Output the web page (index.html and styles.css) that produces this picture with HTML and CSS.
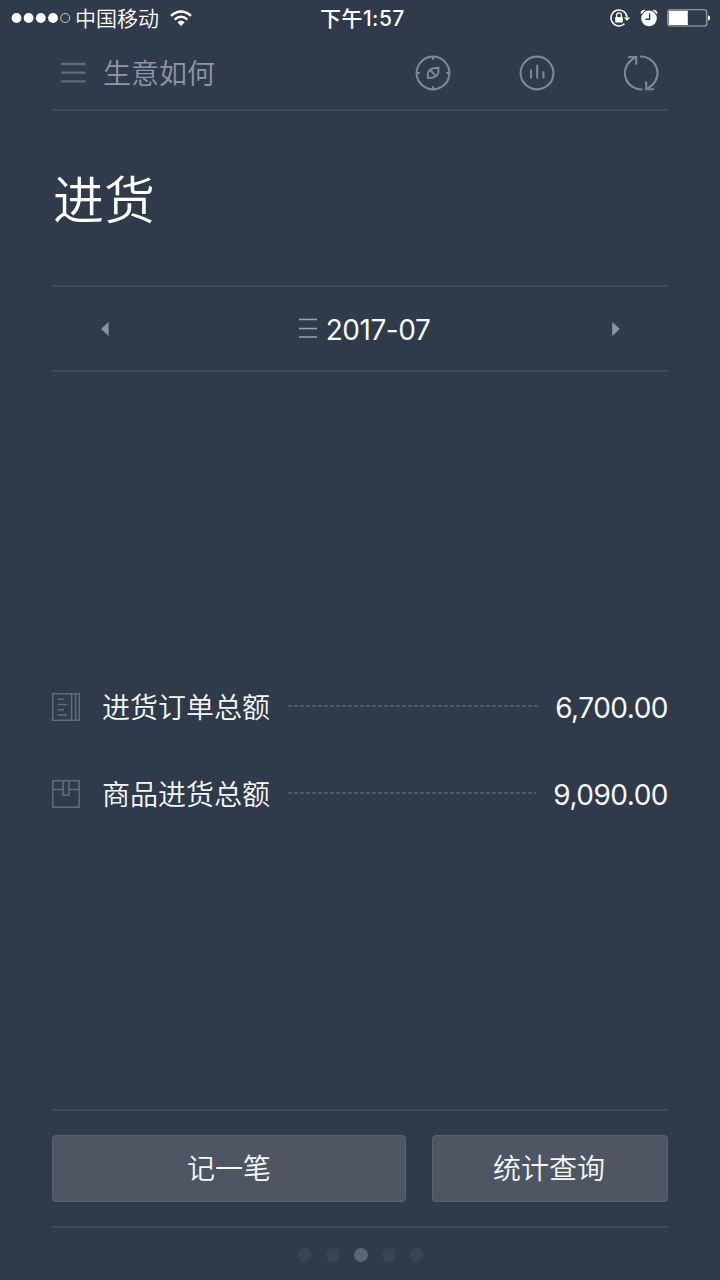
FILE: index.html
```html
<!DOCTYPE html>
<html lang="zh-CN">
<head>
<meta charset="utf-8">
<title>进货</title>
<link rel="stylesheet" href="styles.css">
</head>
<body>
<div class="app">
  <div class="status">
    <div class="status-left">
      <svg class="signal" width="60" height="12" viewBox="0 0 60 12"><g fill="#fff"><circle cx="5.5" cy="6" r="4.9"/><circle cx="17.6" cy="6" r="4.9"/><circle cx="29.8" cy="6" r="4.9"/><circle cx="42" cy="6" r="4.9"/></g><circle cx="54.2" cy="6" r="4.5" fill="none" stroke="#d5d9de" stroke-width=".9"/></svg>
      <span class="carrier">中国移动</span>
      <svg class="wifi" width="22" height="17" viewBox="0 0 22 17"><g fill="none" stroke="#fff" stroke-width="2.4"><path d="M1 5.8Q11 -2.8 21 5.8"/><path d="M4.6 9.7Q11 4 17.4 9.7"/></g><path d="M7.4 12.2Q11 9 14.6 12.2L11 16Z" fill="#fff"/></svg>
    </div>
    <span class="clock">下午1:57</span>
    <div class="status-right">
      <svg width="21" height="18" viewBox="0 0 21 18"><path d="M14.5 14.8A8 8 0 1 1 17 8.4" fill="none" stroke="#fff" stroke-width="1.5"/><path d="M13.7 8.4H20.2L17 11.9Z" fill="#fff"/><rect x="5.2" y="7.9" width="7.6" height="5.7" rx=".7" fill="#fff"/><path d="M6.6 8V6.3a2.4 2.4 0 0 1 4.8 0V8" fill="none" stroke="#fff" stroke-width="1.3"/></svg>
      <svg width="18" height="18" viewBox="0 0 18 18"><circle cx="9" cy="9.4" r="7.8" fill="#fff"/><path d="M.8 4.2Q1 1 5 1L1.4 4.8ZM17.2 4.2Q17 1 13 1L16.6 4.8Z" fill="#fff" stroke="#fff" stroke-width=".6"/><path d="M9.6 4.6V10.2H5.4" fill="none" stroke="#2f3a4a" stroke-width="1.4"/></svg>
      <svg width="44" height="18" viewBox="0 0 44 18"><rect x=".8" y=".8" width="39" height="16.2" rx="2.6" fill="none" stroke="#a6acb5" stroke-width="1.1"/><path d="M3 1.8H20.8V16H3Q1.8 16 1.8 14.8V3Q1.8 1.8 3 1.8Z" fill="#fff"/><path d="M41 6.2Q43.2 7 43.2 9T41 11.8Z" fill="#fff"/></svg>
    </div>
  </div>
  <header class="topbar">
    <svg class="menu" width="26" height="22" viewBox="0 0 26 22"><path d="M1 2H25.5M1 10.7H25.5M1 19.4H25.5" stroke="#626b79" stroke-width="2.3"/></svg>
    <span class="brand">生意如何</span>
    <nav class="tools">
      <svg width="36" height="36" viewBox="0 0 36 36" fill="none" stroke="#7e8796" stroke-width="2.1"><circle cx="18" cy="18" r="16.4"/><path d="M18 1.5V4.7M18 31.3V34.5M1.5 18H4.7M31.3 18H34.5"/><path d="M12.8 23.1V18.2Q14.2 12.7 23.4 12.7V17.8Q22 23.1 12.8 23.1ZM15 15L21 21" stroke-width="1.9"/></svg>
      <svg width="36" height="36" viewBox="0 0 36 36" fill="none" stroke="#7e8796" stroke-width="2.1"><circle cx="18" cy="18" r="16.4"/><path d="M12 15.2V22.8M18.2 10.6V22.8M24.4 17.2V22.8" stroke-linecap="round"/></svg>
      <svg width="36" height="36" viewBox="0 0 36 36" fill="none" stroke="#7e8796" stroke-width="2.1"><path d="M19.4 34.4A16.4 16.4 0 0 1 7.6 5.6L12.6 2M17 1.6A16.4 16.4 0 0 1 28.8 30.4L23.8 34"/><path d="M5.2 2H13.2V9.8M31.2 34.2H23.2V26.2"/></svg>
    </nav>
  </header>
  <h1 class="title">进货</h1>
  <section class="month">
    <svg width="8" height="14" viewBox="0 0 8 14"><path d="M7.6 0V14L0 7Z" fill="#8b93a0"/></svg>
    <div class="month-label">
      <svg width="18" height="21" viewBox="0 0 18 21"><path d="M0 1.6H18M0 10.4H18M0 19.1H18" stroke="#9ca3ae" stroke-width="1.5"/></svg>
      <span class="month-text">2017-07</span>
    </div>
    <svg width="8" height="14" viewBox="0 0 8 14"><path d="M.2 0V14L7.8 7Z" fill="#8b93a0"/></svg>
  </section>
  <main class="summary">
    <div class="row">
      <svg class="kind" width="28" height="28" viewBox="0 0 28 28" fill="none" stroke="#626b78" stroke-width="1.5"><path d="M.8 .8H27.2V27.2H.8ZM19.6 .8V27.2M23.6 .8V27.2"/><path d="M5.5 6.3H12M5.5 11.5H15.3M5.5 16.7H12M5.5 21.9H15.3"/></svg>
      <span class="label">进货订单总额</span>
      <svg class="leader" height="2"><line x1="0" y1="1" x2="100%" y2="1"/></svg>
      <span class="amount">6,700.00</span>
    </div>
    <div class="row">
      <svg class="kind" width="28" height="28" viewBox="0 0 28 28" fill="none" stroke="#626b78" stroke-width="1.5"><path d="M.8 .8H27.2V27.2H.8ZM.8 9.6H11.2M17 9.6H27.2M11.2 .8V15.2H17V.8"/></svg>
      <span class="label">商品进货总额</span>
      <svg class="leader" height="2"><line x1="0" y1="1" x2="100%" y2="1"/></svg>
      <span class="amount">9,090.00</span>
    </div>
  </main>
  <footer class="actions">
    <button class="btn btn-main">记一笔</button>
    <button class="btn btn-side">统计查询</button>
  </footer>
  <div class="pager"><i></i><i></i><i class="on"></i><i></i><i></i></div>
</div>
</body>
</html>
```
FILE: styles.css
```css
* { box-sizing: border-box; }
body { margin: 0; background: #2f3a4a; color: #f6f8fb; font-family: Inter, "Noto Sans CJK SC", sans-serif; }
svg { display: block; flex: none; }
.app { width: 720px; height: 1280px; padding: 0 52px; display: flex; flex-direction: column; overflow: hidden; }
.status { height: 36px; margin: 0 -41px; display: grid; grid-template-columns: 309px 1fr auto; align-items: center; color: #fff; font-size: 21px; line-height: 36px; }
.status-left { display: flex; align-items: center; }
.carrier { margin-left: 4px; padding-top: 1px; font-weight: 350; line-height: 35px; }
.wifi { margin-left: 11px; }
.clock { padding-top: 2px; font-weight: 500; font-size: 21px; line-height: 34px; letter-spacing: .45px; }
.status-right { display: flex; align-items: center; gap: 9px; margin-right: -2px; }
.topbar { height: 75px; border-bottom: 2px solid #3e4857; display: flex; align-items: center; padding: 0 9px 0 8px; }
.brand { margin-left: 17px; padding-top: 2px; font-size: 28px; line-height: 40px; font-weight: 350; color: #8f96a3; }
.tools { margin-left: auto; display: flex; gap: 68px; }
.title { height: 174px; margin: 0; padding: 4px 0 0 1px; font-size: 51px; line-height: 172px; font-weight: 350; color: #fff; }
.month { height: 87px; border-top: 2px solid #3e4857; border-bottom: 2px solid #3e4857; display: flex; align-items: center; justify-content: space-between; padding: 0 48px 0 49px; }
.month-label { display: flex; align-items: center; gap: 9px; padding-left: 8px; font-size: 28px; line-height: 40px; }
.month-text { padding-top: 2px; letter-spacing: -.45px; }
.summary { flex: 1; display: flex; flex-direction: column; padding-top: 292px; }
.row { height: 87px; display: flex; align-items: center; }
.kind { margin-bottom: 2px; }
.label { margin-left: 22px; font-size: 28px; line-height: 40px; font-weight: 350; }
.leader { flex: 1 1 0; min-width: 0; margin: 0 17px 3px 18px; }
.leader line { stroke: #5c6573; stroke-width: 1.4; stroke-dasharray: 4 2; }
.amount { font-size: 28px; line-height: 40px; letter-spacing: -.5px; }
.actions { height: 119px; border-top: 2px solid #3e4857; border-bottom: 2px solid #3e4857; display: flex; gap: 26px; padding: 24px 0; }
.btn { height: 67px; padding: 1px 0 0; border: 1px solid #586270; border-radius: 4px; background: #4d5662; color: #f6f8fb; font: 350 28px/64px Inter, "Noto Sans CJK SC", sans-serif; }
.btn-main { width: 354px; }
.btn-side { width: 236px; padding-right: 2px; }
.pager { height: 52px; padding: 2px 0 0 2px; display: flex; justify-content: center; align-items: center; gap: 14px; }
.pager i { width: 14px; height: 14px; border-radius: 50%; background: #3a4454; }
.pager .on { background: #5d6673; }
```
